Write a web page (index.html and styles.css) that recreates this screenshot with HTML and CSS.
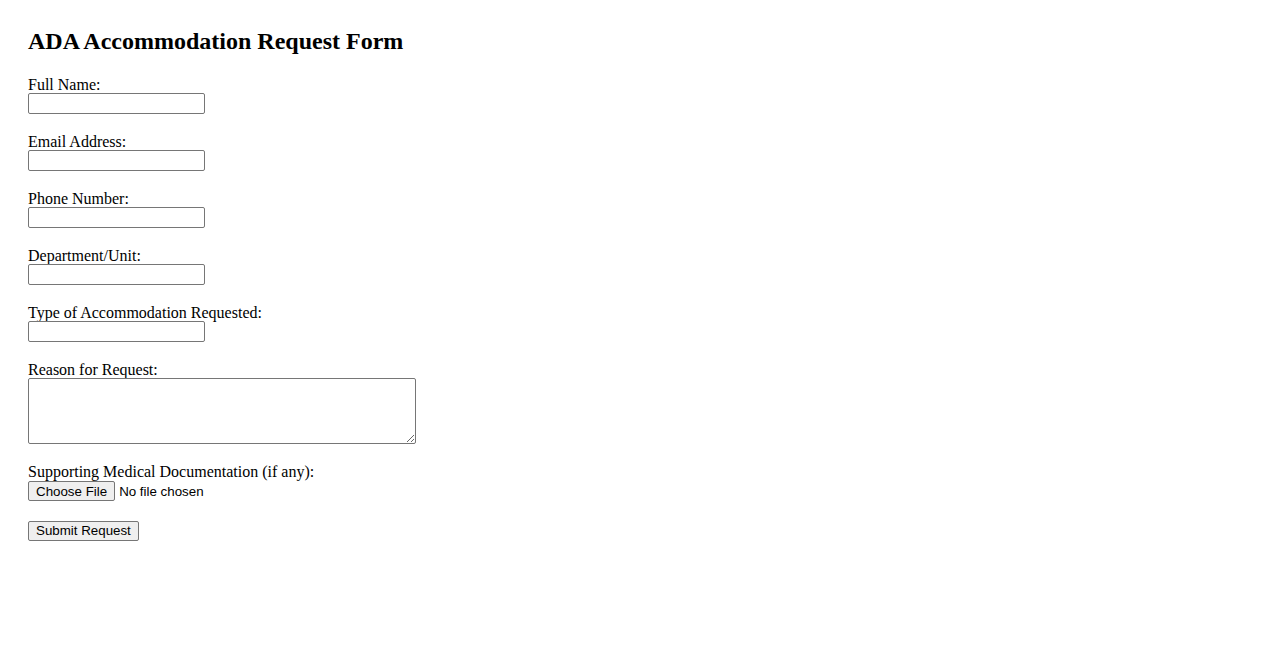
FILE: index.html
```html
<!DOCTYPE html>
<html lang="en">
<head>
<meta charset="utf-8">
<title>ADA Accommodation Request Form</title>
<link rel="stylesheet" href="styles.css">
</head>
<body>
<main class="page">
  <h2 class="title">ADA Accommodation Request Form</h2>
  <form class="form">
    <div class="field">
      <label for="name">Full Name:</label>
      <input class="text-input" type="text" id="name">
    </div>
    <div class="field">
      <label for="email">Email Address:</label>
      <input class="text-input" type="email" id="email">
    </div>
    <div class="field">
      <label for="phone">Phone Number:</label>
      <input class="text-input" type="tel" id="phone">
    </div>
    <div class="field">
      <label for="dept">Department/Unit:</label>
      <input class="text-input" type="text" id="dept">
    </div>
    <div class="field">
      <label for="type">Type of Accommodation Requested:</label>
      <input class="text-input" type="text" id="type">
    </div>
    <div class="field">
      <label for="reason">Reason for Request:</label>
      <textarea class="text-area" id="reason"></textarea>
    </div>
    <div class="field">
      <label for="doc">Supporting Medical Documentation (if any):</label>
      <input class="file-input" type="file" id="doc">
    </div>
    <div class="actions">
      <button class="submit" type="submit">Submit Request</button>
    </div>
  </form>
</main>
</body>
</html>
```
FILE: styles.css
```css
html, body {
  margin: 0;
  padding: 0;
  background: #ffffff;
}

body {
  font-family: "Liberation Serif", "Times New Roman", serif;
  font-size: 16px;
  color: #000000;
}

.page {
  padding: 28px;
}

.title {
  margin: 0 0 22px 0;
  font-size: 24px;
  line-height: 26px;
  font-weight: bold;
}

.form {
  display: flex;
  flex-direction: column;
  align-items: flex-start;
}

.field {
  display: flex;
  flex-direction: column;
  align-items: flex-start;
  margin-bottom: 19px;
}

.field label {
  line-height: 18px;
  margin-bottom: -1px;
}

.text-input {
  box-sizing: border-box;
  width: 177px;
  height: 21px;
  margin: 0;
  padding: 1px 2px;
  border: 1px solid #767676;
  border-radius: 2px;
  font-family: "Liberation Sans", Arial, sans-serif;
  font-size: 13.33px;
  background: #ffffff;
}

.text-area {
  box-sizing: border-box;
  width: 388px;
  height: 66px;
  margin: 0;
  padding: 2px;
  border: 1px solid #767676;
  border-radius: 2px;
  font-family: "Liberation Mono", monospace;
  font-size: 13.33px;
  resize: both;
}

.file-input {
  margin: 1px 0 0 0;
  padding: 0;
  font-family: "Liberation Sans", Arial, sans-serif;
  font-size: 13.33px;
  line-height: 20px;
}

.file-input::file-selector-button {
  box-sizing: border-box;
  height: 20px;
  margin: 0 4px 0 0;
  padding: 1px 7px;
  border: 1px solid #767676;
  border-radius: 2px;
  background: #efefef;
  font-family: "Liberation Sans", Arial, sans-serif;
  font-size: 13.33px;
  color: #000000;
}

.submit {
  box-sizing: border-box;
  height: 20px;
  margin: 0;
  padding: 1px 7px;
  border: 1px solid #767676;
  border-radius: 2px;
  background: #efefef;
  font-family: "Liberation Sans", Arial, sans-serif;
  font-size: 13.33px;
  color: #000000;
}
```
